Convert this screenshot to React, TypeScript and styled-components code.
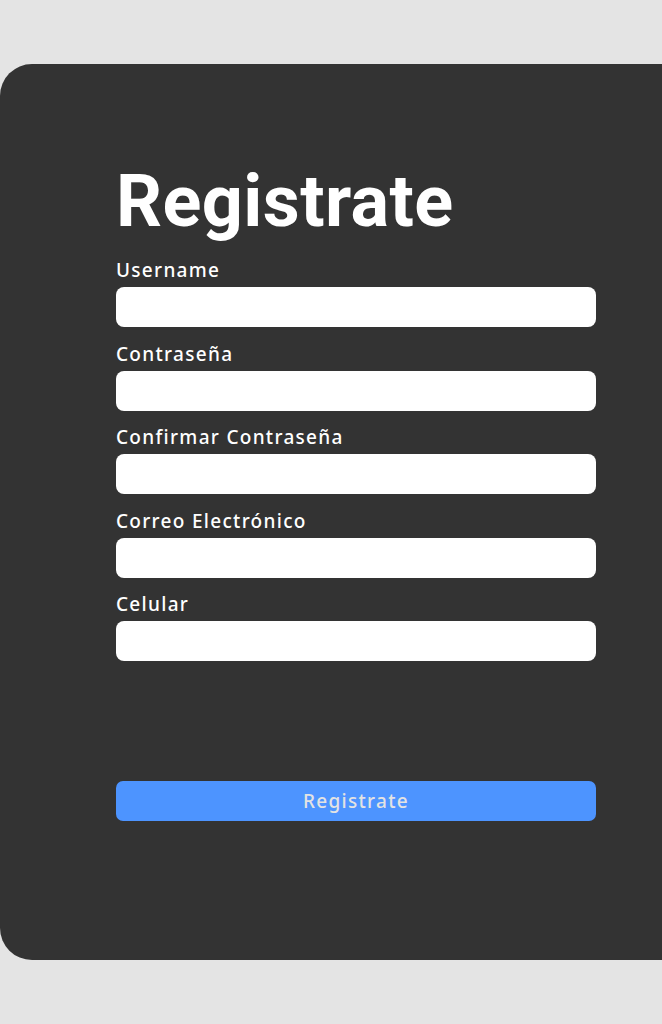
import React from "react";
import styled, { createGlobalStyle } from "styled-components";

const GlobalStyle = createGlobalStyle`
  html, body {
    margin: 0;
    padding: 0;
    background: #e4e4e4;
    overflow-x: hidden;
  }
  * { box-sizing: border-box; }
`;

const Page = styled.div`
  padding: 64px 0;
  min-height: 1024px;
`;

const Card = styled.form`
  background: #333333;
  border-radius: 32px 0 0 32px;
  height: 896px;
  padding: 96px 0 0 116px;
  display: flex;
  flex-direction: column;
`;

const Title = styled.h1`
  margin: 0 0 15px;
  font-family: Roboto, "Liberation Sans", sans-serif;
  font-weight: 700;
  font-size: 72px;
  line-height: 84px;
  letter-spacing: 0.4px;
  color: #ffffff;
`;

const Fields = styled.div`
  display: flex;
  flex-direction: column;
  gap: 15.5px;
  width: 480px;
`;

const Field = styled.label`
  display: flex;
  flex-direction: column;
  gap: 6px;
`;

const LabelText = styled.span`
  font-family: "Noto Sans", "Open Sans", sans-serif;
  font-weight: 500;
  font-size: 19px;
  line-height: 22px;
  letter-spacing: 1.3px;
  color: #ffffff;
`;

const Input = styled.input`
  width: 480px;
  height: 40px;
  border: none;
  border-radius: 8px;
  background: #ffffff;
  outline: none;
  padding: 0 12px;
  font-size: 16px;
`;

const Button = styled.button`
  margin-top: 120px;
  width: 480px;
  height: 40px;
  border: none;
  border-radius: 7px;
  background: #4d94ff;
  color: #e3e3e3;
  font-family: "Noto Sans", "Open Sans", sans-serif;
  font-weight: 500;
  font-size: 19px;
  letter-spacing: 1.3px;
  cursor: pointer;
`;

const fields = [
  { label: "Username", type: "text" },
  { label: "Contraseña", type: "password" },
  { label: "Confirmar Contraseña", type: "password" },
  { label: "Correo Electrónico", type: "email" },
  { label: "Celular", type: "tel" },
];

export default function App() {
  return (
    <>
      <GlobalStyle />
      <Page>
        <Card onSubmit={(e) => e.preventDefault()}>
          <Title>Registrate</Title>
          <Fields>
            {fields.map((f) => (
              <Field key={f.label}>
                <LabelText>{f.label}</LabelText>
                <Input type={f.type} />
              </Field>
            ))}
          </Fields>
          <Button type="submit">Registrate</Button>
        </Card>
      </Page>
    </>
  );
}
